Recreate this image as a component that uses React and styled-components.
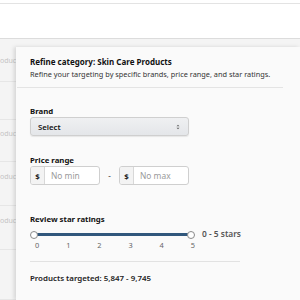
import React from "react";
import styled, { createGlobalStyle } from "styled-components";

const GlobalStyle = createGlobalStyle`
  body {
    margin: 0;
    background: #fff;
    font-family: "Noto Sans", "Open Sans", sans-serif;
  }
`;

const Page = styled.div`
  width: 300px;
  height: 300px;
  overflow: hidden;
  display: flex;
  flex-direction: column;
`;

const TopBar = styled.div`
  margin-top: 3px;
  height: 35px;
  border-top: 1px solid #e3e3e3;
  border-bottom: 1px solid #dcdcdc;
  background: #fff;
`;

const Body = styled.div`
  flex: 1;
  display: flex;
  background: #f4f4f4;
`;

const Side = styled.div`
  width: 16px;
  overflow: hidden;
  flex-shrink: 0;
`;

const SideRow = styled.div`
  height: ${(p) => p.h}px;
  padding-top: ${(p) => p.pt}px;
  box-sizing: border-box;
  border-bottom: 1px solid #e6e6e6;
  font-size: 7px;
  line-height: 12px;
  color: #c4c4c4;
  white-space: nowrap;
`;

const Panel = styled.div`
  flex: 1;
  margin-top: 8px;
  background: #fafafa;
  box-shadow: -2px 0 4px rgba(0, 0, 0, 0.13);
  display: flex;
  flex-direction: column;
`;

const Header = styled.div`
  margin: 0 17px 0 1px;
  padding: 9px 0 7px 13px;
  border-bottom: 1px solid #e4e4e4;
`;

const Title = styled.div`
  font-size: 8px;
  line-height: 12px;
  font-weight: 700;
  color: #111;
`;

const Subtitle = styled.div`
  font-size: 7.35px;
  line-height: 12px;
  color: #333;
`;

const Content = styled.div`
  padding: 0 0 0 14px;
  display: flex;
  flex-direction: column;
`;

const Label = styled.div`
  margin-top: ${(p) => p.mt}px;
  font-size: 7.8px;
  line-height: 12px;
  font-weight: 700;
  color: #111;
`;

const SelectBox = styled.div`
  width: 159px;
  height: 19px;
  box-sizing: border-box;
  border: 1px solid #cfcfcf;
  border-radius: 3px;
  background: linear-gradient(#eff0f2, #e4e6e9);
  box-shadow: 0 1px 1px rgba(0, 0, 0, 0.08);
  display: flex;
  align-items: center;
  justify-content: space-between;
  padding: 0 8px 0 7px;
  font-size: 7.8px;
  font-weight: 600;
  color: #111;
`;

const PriceRow = styled.div`
  display: flex;
  align-items: center;
`;

const PriceInput = styled.div`
  width: 70px;
  height: 19px;
  box-sizing: border-box;
  border: 1px solid #cfcfcf;
  border-radius: 3px;
  background: #fff;
  display: flex;
  overflow: hidden;
`;

const Addon = styled.div`
  width: 13px;
  flex-shrink: 0;
  background: #f3f3f3;
  border-right: 1px solid #d8d8d8;
  display: flex;
  align-items: center;
  justify-content: center;
  font-size: 7.8px;
  font-weight: 700;
  color: #222;
`;

const Placeholder = styled.div`
  padding-left: 6px;
  display: flex;
  align-items: center;
  font-size: 8.4px;
  color: #9a9a9a;
`;

const Dash = styled.div`
  width: 19px;
  text-align: center;
  font-size: 8px;
  color: #444;
`;

const SliderRow = styled.div`
  margin-top: 3px;
  display: flex;
  align-items: flex-start;
`;

const SliderBox = styled.div`
  width: 165px;
  display: flex;
  flex-direction: column;
`;

const Track = styled.div`
  position: relative;
  height: 12px;
  margin: 0 3px;
  &::before {
    content: "";
    position: absolute;
    left: 0;
    right: 0;
    top: 5px;
    height: 2.5px;
    background: #31577c;
  }
`;

const Handle = styled.div`
  position: absolute;
  top: 3px;
  width: 6px;
  height: 6px;
  border-radius: 50%;
  border: 1px solid #8a8a8a;
  background: #fff;
  left: ${(p) => (p.end ? "auto" : "-3px")};
  right: ${(p) => (p.end ? "-3px" : "auto")};
`;

const Ticks = styled.div`
  display: flex;
  justify-content: space-between;
  padding: 0 0 0 5px;
  font-size: 7.4px;
  line-height: 10px;
  color: #666;
`;

const Stars = styled.div`
  margin-left: 7px;
  font-size: 8.4px;
  line-height: 12px;
  font-weight: 600;
  color: #555;
`;

const Divider = styled.div`
  width: 210px;
  margin-top: 11px;
  border-top: 1px solid #e2e2e2;
`;

const Targeted = styled.div`
  margin-top: 10px;
  font-size: 7.9px;
  line-height: 12px;
  font-weight: 600;
  color: #222;
`;

const Chevron = () => (
  <svg width="4" height="6" viewBox="0 0 4 6">
    <path d="M0.5 2.3 L2 0.8 L3.5 2.3 Z M0.5 3.7 L2 5.2 L3.5 3.7 Z" fill="#666" />
  </svg>
);

const rows = [
  { h: 43, pt: 16, text: "oduc" },
  { h: 38, pt: 0, text: "" },
  { h: 42, pt: 8, text: "oduc" },
  { h: 44, pt: 9, text: "oduc" },
  { h: 44, pt: 9, text: "oduc" },
  { h: 50, pt: 0, text: "" },
];

export default function App() {
  return (
    <Page>
      <GlobalStyle />
      <TopBar />
      <Body>
        <Side>
          {rows.map((r, i) => (
            <SideRow key={i} h={r.h} pt={r.pt}>
              {r.text}
            </SideRow>
          ))}
        </Side>
        <Panel>
          <Header>
            <Title>Refine category: Skin Care Products</Title>
            <Subtitle>
              Refine your targeting by specific brands, price range, and star ratings.
            </Subtitle>
          </Header>
          <Content>
            <Label mt={17}>Brand</Label>
            <SelectBox>
              <span>Select</span>
              <Chevron />
            </SelectBox>
            <Label mt={18}>Price range</Label>
            <PriceRow>
              <PriceInput>
                <Addon>$</Addon>
                <Placeholder>No min</Placeholder>
              </PriceInput>
              <Dash>-</Dash>
              <PriceInput>
                <Addon>$</Addon>
                <Placeholder>No max</Placeholder>
              </PriceInput>
            </PriceRow>
            <Label mt={28}>Review star ratings</Label>
            <SliderRow>
              <SliderBox>
                <Track>
                  <Handle />
                  <Handle end />
                </Track>
                <Ticks>
                  {[0, 1, 2, 3, 4, 5].map((n) => (
                    <span key={n}>{n}</span>
                  ))}
                </Ticks>
              </SliderBox>
              <Stars>0 - 5 stars</Stars>
            </SliderRow>
            <Divider />
            <Targeted>Products targeted: 5,847 - 9,745</Targeted>
          </Content>
        </Panel>
      </Body>
    </Page>
  );
}
